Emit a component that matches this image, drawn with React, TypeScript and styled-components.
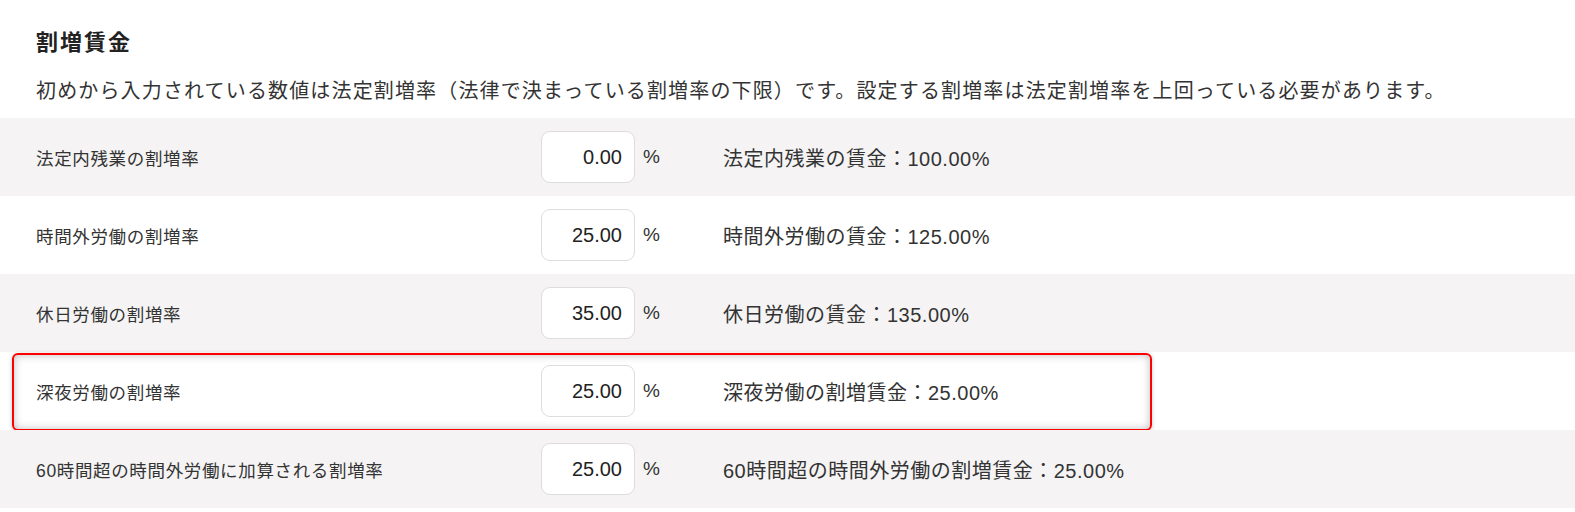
import React from "react";
import styled, { createGlobalStyle } from "styled-components";

const GlobalStyle = createGlobalStyle`
  html, body {
    margin: 0;
    padding: 0;
    background: #ffffff;
  }
  body {
    font-family: "Liberation Sans", "Noto Sans CJK JP", sans-serif;
    color: #333333;
  }
`;

interface RateRow {
  label: string;
  value: string;
  result: string;
  highlighted?: boolean;
}

const rows: RateRow[] = [
  { label: "法定内残業の割増率", value: "0.00", result: "法定内残業の賃金：100.00%" },
  { label: "時間外労働の割増率", value: "25.00", result: "時間外労働の賃金：125.00%" },
  { label: "休日労働の割増率", value: "35.00", result: "休日労働の賃金：135.00%" },
  { label: "深夜労働の割増率", value: "25.00", result: "深夜労働の割増賃金：25.00%", highlighted: true },
  {
    label: "60時間超の時間外労働に加算される割増率",
    value: "25.00",
    result: "60時間超の時間外労働の割増賃金：25.00%",
  },
];

const Section = styled.section`
  padding-top: 28px;
`;

const Header = styled.div`
  padding-left: 36px;
  display: flex;
  flex-direction: column;
  gap: 20px;
  height: 90px;
`;

const Title = styled.h2`
  margin: 0;
  font-size: 22px;
  line-height: 30px;
  font-weight: 700;
  color: #222222;
  letter-spacing: 2px;
`;

const Description = styled.p`
  margin: 0;
  font-size: 20px;
  line-height: 26px;
  letter-spacing: 1.15px;
  color: #333333;
`;

const List = styled.div`
  display: flex;
  flex-direction: column;
`;

const Row = styled.div<{ $striped: boolean }>`
  position: relative;
  display: grid;
  grid-template-columns: 497px 94px 22px auto;
  column-gap: 8px;
  align-items: center;
  height: 78px;
  padding-left: 36px;
  background: ${({ $striped }) => ($striped ? "#f5f3f4" : "#ffffff")};
`;

const Label = styled.span`
  font-size: 17.5px;
  letter-spacing: 0.65px;
  color: #333333;
`;

const RateInput = styled.input`
  box-sizing: border-box;
  width: 94px;
  height: 52px;
  border: 1px solid #dddddd;
  border-radius: 9px;
  background: #ffffff;
  padding: 0 12px 0 0;
  text-align: right;
  font-family: "Liberation Sans", sans-serif;
  font-size: 20px;
  color: #222222;
  outline: none;
`;

const Unit = styled.span`
  font-size: 19px;
  color: #333333;
`;

const Result = styled.span`
  margin-left: 50px;
  font-size: 20px;
  letter-spacing: 0.5px;
  color: #333333;
`;

const Highlight = styled.div`
  position: absolute;
  top: 1px;
  left: 12px;
  width: 1140px;
  height: 78px;
  box-sizing: border-box;
  border: 2px solid #ff0000;
  border-radius: 6px;
  box-shadow: inset 0 0 8px rgba(0, 0, 0, 0.25), 0 1px 4px rgba(0, 0, 0, 0.22);
  pointer-events: none;
`;

const App: React.FC = () => {
  return (
    <>
      <GlobalStyle />
      <Section>
        <Header>
          <Title>割増賃金</Title>
          <Description>
            初めから入力されている数値は法定割増率（法律で決まっている割増率の下限）です。設定する割増率は法定割増率を上回っている必要があります。
          </Description>
        </Header>
        <List>
          {rows.map((row, i) => (
            <Row key={row.label} $striped={i % 2 === 0}>
              <Label>{row.label}</Label>
              <RateInput defaultValue={row.value} />
              <Unit>%</Unit>
              <Result>{row.result}</Result>
              {row.highlighted && <Highlight />}
            </Row>
          ))}
        </List>
      </Section>
    </>
  );
};

export default App;
